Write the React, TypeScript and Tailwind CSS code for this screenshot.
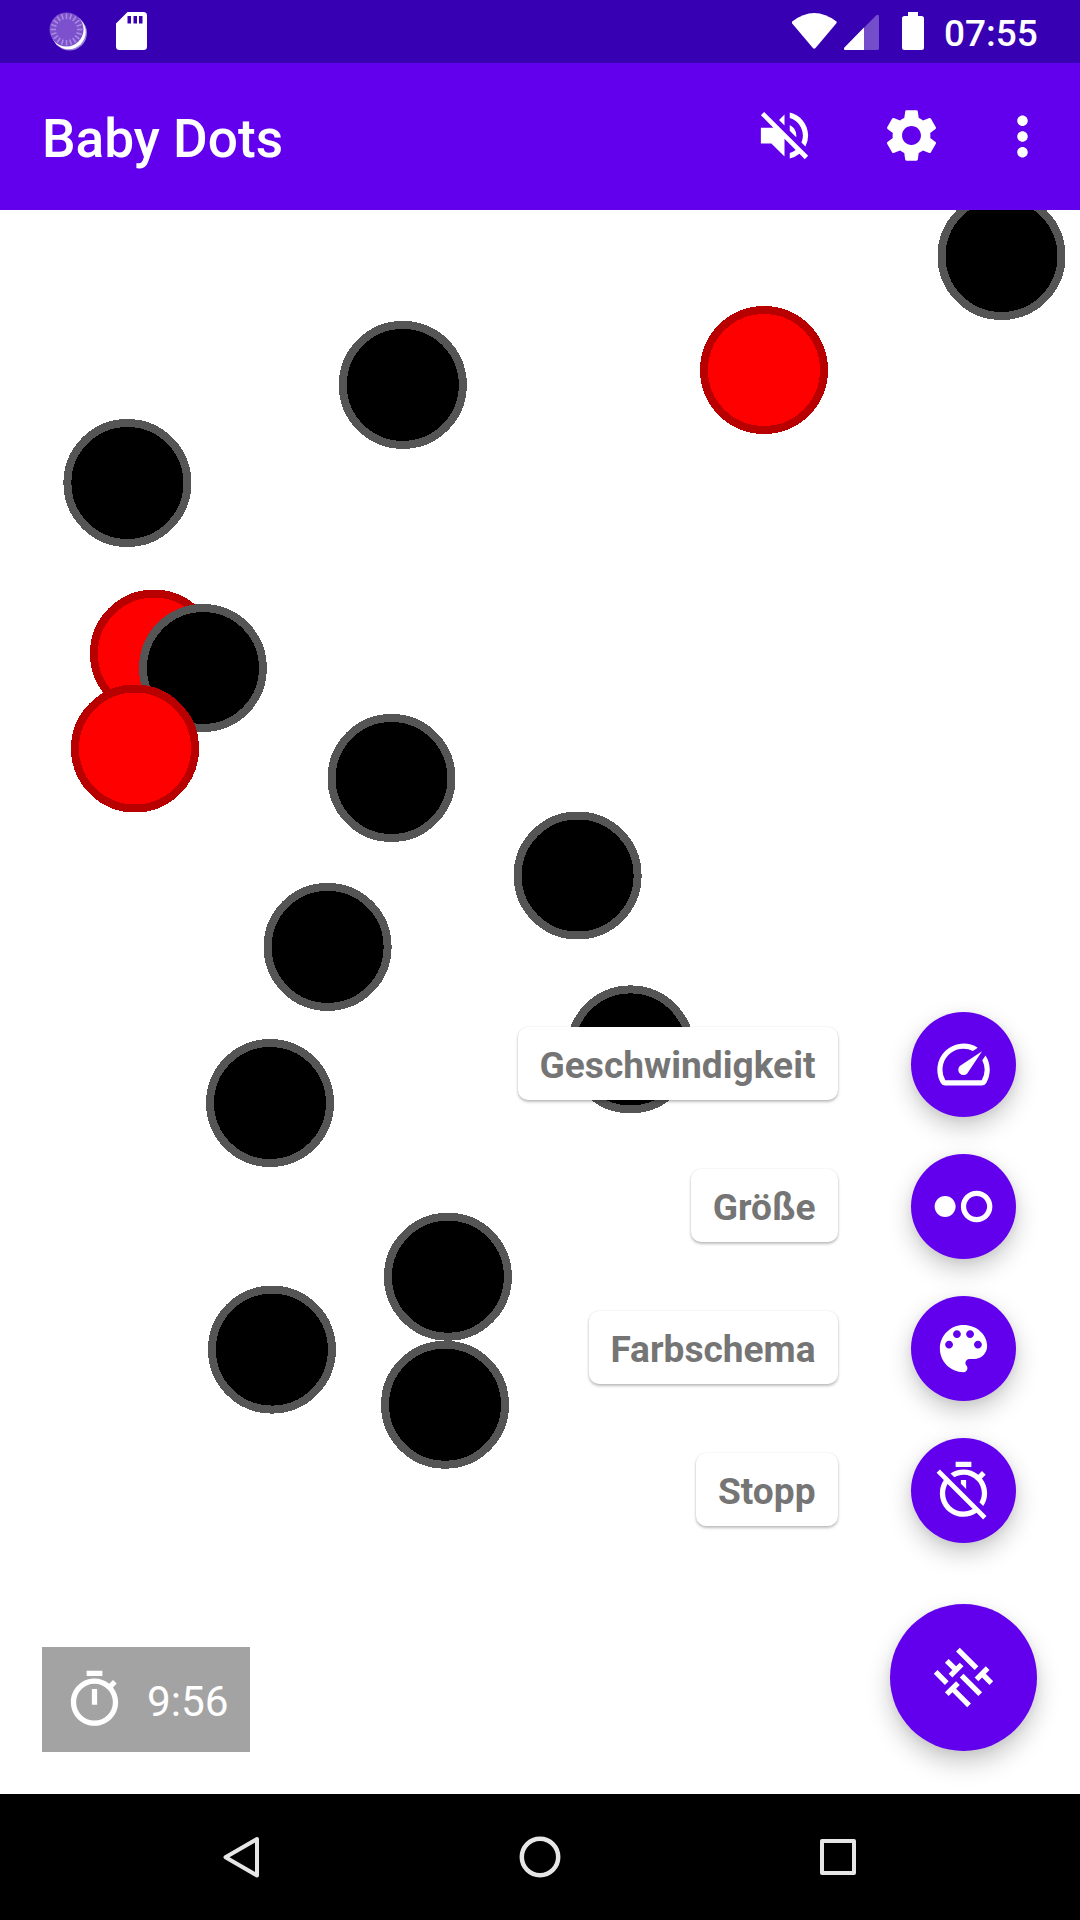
import React from "react";
import {
  MdHdrWeak,
  MdMoreVert,
  MdSettings,
  MdVolumeOff,
} from "react-icons/md";

type Dot = { x: number; y: number; red?: boolean };

// Centres in canvas coordinates, listed in paint order.
const dots: Dot[] = [
  { x: 1001.5, y: 46 },
  { x: 402.8, y: 174.9 },
  { x: 764, y: 160, red: true },
  { x: 127.4, y: 273 },
  { x: 153.9, y: 443.6, red: true },
  { x: 203, y: 458 },
  { x: 135, y: 538.5, red: true },
  { x: 391.5, y: 568 },
  { x: 577.6, y: 665.5 },
  { x: 327.6, y: 736.9 },
  { x: 270, y: 893 },
  { x: 630.5, y: 839.4 },
  { x: 447.9, y: 1066.7 },
  { x: 271.9, y: 1139.6 },
  { x: 445, y: 1194.7 },
];

const paths = {
  speed:
    "M20.38 8.57l-1.23 1.85a8 8 0 0 1-.22 7.58H5.07A8 8 0 0 1 15.58 6.85l1.85-1.23A10 10 0 0 0 3.35 19a2 2 0 0 0 1.72 1h13.85a2 2 0 0 0 1.74-1 10 10 0 0 0-.27-10.44zm-9.79 6.84a2 2 0 0 0 2.83 0l5.66-8.49-8.49 5.66a2 2 0 0 0 0 2.83z",
  palette:
    "M12 3c-4.97 0-9 4.03-9 9s4.03 9 9 9c.83 0 1.5-.67 1.5-1.5 0-.39-.15-.74-.39-1.01-.23-.26-.38-.61-.38-.99 0-.83.67-1.5 1.5-1.5H16c2.76 0 5-2.24 5-5 0-4.42-4.03-8-9-8zm-5.5 9c-.83 0-1.5-.67-1.5-1.5S5.67 9 6.5 9 8 9.67 8 10.5 7.33 12 6.5 12zm3-4C8.67 8 8 7.33 8 6.5S8.67 5 9.5 5s1.5.67 1.5 1.5S10.33 8 9.5 8zm5 0c-.83 0-1.5-.67-1.5-1.5S13.67 5 14.5 5s1.5.67 1.5 1.5S15.33 8 14.5 8zm3 4c-.83 0-1.5-.67-1.5-1.5S16.67 9 17.5 9s1.5.67 1.5 1.5-.67 1.5-1.5 1.5z",
  timerOff:
    "M19.04 4.55l-1.42 1.42C16.07 4.74 14.12 4 12 4c-1.83 0-3.53.55-4.95 1.48l1.46 1.46C9.53 6.35 10.73 6 12 6c3.87 0 7 3.13 7 7 0 1.27-.35 2.47-.94 3.49l1.45 1.45C20.45 16.53 21 14.83 21 13c0-2.12-.74-4.07-1.97-5.61l1.42-1.42-1.41-1.42zM15 1H9v2h6V1zm-4 8.44l2 2V8h-2v1.44zM3.02 4L1.75 5.27 4.5 8.03C3.55 9.45 3 11.16 3 13c0 4.97 4.02 9 9 9 1.84 0 3.55-.55 4.98-1.5l2.5 2.5 1.27-1.27-7.71-7.71L3.02 4zM12 20c-3.87 0-7-3.13-7-7 0-1.28.35-2.48.95-3.52l9.56 9.56c-1.03.61-2.23.96-3.51.96z",
  timer:
    "M15 1H9v2h6V1zm-4 13h2V8h-2v6zm8.03-6.61l1.42-1.42c-.43-.51-.9-.99-1.41-1.41l-1.42 1.42C16.07 4.74 14.12 4 12 4c-4.97 0-9 4.03-9 9s4.02 9 9 9 9-4.03 9-9c0-2.12-.74-4.07-1.97-5.61zM12 20c-3.87 0-7-3.13-7-7s3.13-7 7-7 7 3.13 7 7-3.13 7-7 7z",
  tune: "M3 17v2h6v-2H3zM3 5v2h10V5H3zm10 16v-2h8v-2h-8v-2h-2v6h2zM7 9v2H3v2h4v2h2V9H7zm14 4v-2H11v2h10zm-6-4h2V7h4V5h-4V3h-2v6z",
};

function Icon({ d, className = "" }: { d: string; className?: string }) {
  return (
    <svg viewBox="0 0 24 24" fill="currentColor" className={`size-[63px] ${className}`}>
      <path d={d} />
    </svg>
  );
}

const actions = [
  { label: "Geschwindigkeit", icon: <Icon d={paths.speed} /> },
  { label: "Größe", icon: <MdHdrWeak className="size-[63px]" /> },
  { label: "Farbschema", icon: <Icon d={paths.palette} /> },
  { label: "Stopp", icon: <Icon d={paths.timerOff} /> },
];

const ticks = Array.from({ length: 20 }, (_, i) => i * 18);

function StatusBar() {
  return (
    <div className="flex h-[63px] items-start bg-[#3700b3] pl-[49px]">
      <svg viewBox="0 0 40 40" className="mt-[12px] size-[40px]">
        <circle cx="20.5" cy="21" r="17.5" fill="#fff" fillOpacity="0.5" />
        <circle cx="19.5" cy="20" r="17.2" fill="#fff" />
        <circle cx="17.5" cy="17.5" r="17" fill="#7d50cd" />
        <g stroke="#a98be0" strokeWidth="1.6">
          {ticks.map((a) => (
            <path key={a} d="M17.5 1.5v5.5" transform={`rotate(${a} 17.5 17.5)`} />
          ))}
        </g>
      </svg>
      <svg viewBox="0 0 31 38" className="mt-[12px] ml-[27px] h-[38px] w-[31px]">
        <path
          fill="#fff"
          fillRule="evenodd"
          d="M11.5 0H27.5Q31 0 31 3.5V34.5Q31 38 27.5 38H3.5Q0 38 0 34.5V11.5ZM11.5 4V11.5H15V4ZM17.5 4V11.5H21V4ZM23 4V11.5H26.5V4Z"
        />
      </svg>
      <svg viewBox="0 0 134 40" className="mt-[12px] ml-[645px] h-[40px] w-[134px]" fill="#fff">
        <path d="M0.2 9.5Q22.2 -7.5 44.5 9.5Q45 10.5 44.2 11.5L23.5 36Q22.2 37.5 20.9 36L0.2 11.5Q-0.5 10.5 0.2 9.5Z" />
        <path
          fillOpacity="0.3"
          d="M52.5 35.5L84 3.5Q87 1.5 87 5V36.5Q87 38 85.5 38H53.5Q51 38 52.5 35.5Z"
        />
        <path d="M52.5 35.5L72 15.5V38H53.5Q51 38 52.5 35.5Z" />
        <path d="M116 0H126V4H129.5Q132 4 132 6.5V35.5Q132 38 129.5 38H112.5Q110 38 110 35.5V6.5Q110 4 112.5 4H116Z" />
      </svg>
      <span className="mt-[12px] ml-[18px] text-[37px] leading-[43px] font-medium text-white">
        07:55
      </span>
    </div>
  );
}

function AppBar() {
  return (
    <header className="flex h-[147px] items-center bg-[#6200ee] pl-[42px] text-white">
      <h1 className="grow pt-[5px] text-[53.2px] leading-[62px] font-medium">Baby Dots</h1>
      <MdVolumeOff className="mr-[64px] mb-[2px] size-[63px]" />
      <MdSettings className="mr-[48px] mb-[2px] size-[63px]" />
      <MdMoreVert className="mr-[26px] size-[63px]" />
    </header>
  );
}

export default function App() {
  return (
    <div className="flex h-[1920px] w-[1080px] flex-col overflow-hidden bg-white font-['Roboto',sans-serif]">
      <StatusBar />
      <AppBar />
      <main className="relative flex h-[1584px] items-end justify-between pr-[43px] pb-[42px] pl-[42px]">
        <svg viewBox="0 0 1080 1584" className="absolute inset-0 h-[1584px] w-[1080px]">
          {dots.map((dot) => (
            <circle
              key={`${dot.x}-${dot.y}`}
              cx={dot.x}
              cy={dot.y}
              r="60"
              strokeWidth="8"
              shapeRendering="crispEdges"
              fill={dot.red ? "#ff0000" : "#000000"}
              stroke={dot.red ? "#b90000" : "#555555"}
            />
          ))}
        </svg>
        <div className="relative flex h-[105px] w-[208px] items-center bg-[#a3a3a3] pl-[21px] text-white">
          <Icon d={paths.timer} />
          <span className="ml-[21px] pt-[5px] text-[42.3px] leading-[50px]">9:56</span>
        </div>
        <div className="relative mb-px flex flex-col items-end">
          <div className="mr-[21px] flex flex-col items-end gap-[37px]">
            {actions.map((action) => (
              <div key={action.label} className="flex items-center gap-[73px]">
                <span className="mb-[2px] flex h-[73px] items-center rounded-[10px] bg-white pt-[3px] pr-[22.5px] pl-[21.5px] text-[37.1px] leading-[43px] font-bold text-[#757575] shadow-[0_2px_3px_rgba(0,0,0,0.25),0_0_2px_rgba(0,0,0,0.1)]">
                  {action.label}
                </span>
                <button className="flex size-[105px] items-center justify-center rounded-full bg-[#6200ee] text-white shadow-[0_10px_24px_rgba(0,0,0,0.21),0_2px_10px_rgba(0,0,0,0.06)]">
                  {action.icon}
                </button>
              </div>
            ))}
          </div>
          <button className="mt-[61px] flex size-[147px] items-center justify-center rounded-full bg-[#6200ee] text-white shadow-[0_12px_24px_rgba(0,0,0,0.21),0_2px_10px_rgba(0,0,0,0.06)]">
            <Icon d={paths.tune} className="rotate-45" />
          </button>
        </div>
      </main>
      <nav className="flex h-[126px] items-center justify-center gap-[235px] bg-black">
        <svg viewBox="0 0 63 63" className="size-[63px]" fill="none" stroke="#e6e6e6" strokeWidth="4" strokeLinejoin="round">
          <path d="M46 13V49.5L14.5 31.2Z" />
        </svg>
        <svg viewBox="0 0 63 63" className="size-[63px]" fill="none" stroke="#e6e6e6" strokeWidth="4.5">
          <circle cx="31" cy="31" r="18.2" />
        </svg>
        <svg viewBox="0 0 63 63" className="size-[63px]" fill="none" stroke="#e6e6e6" strokeWidth="4" strokeLinejoin="round">
          <rect x="15" y="15" width="32" height="32" />
        </svg>
      </nav>
    </div>
  );
}
